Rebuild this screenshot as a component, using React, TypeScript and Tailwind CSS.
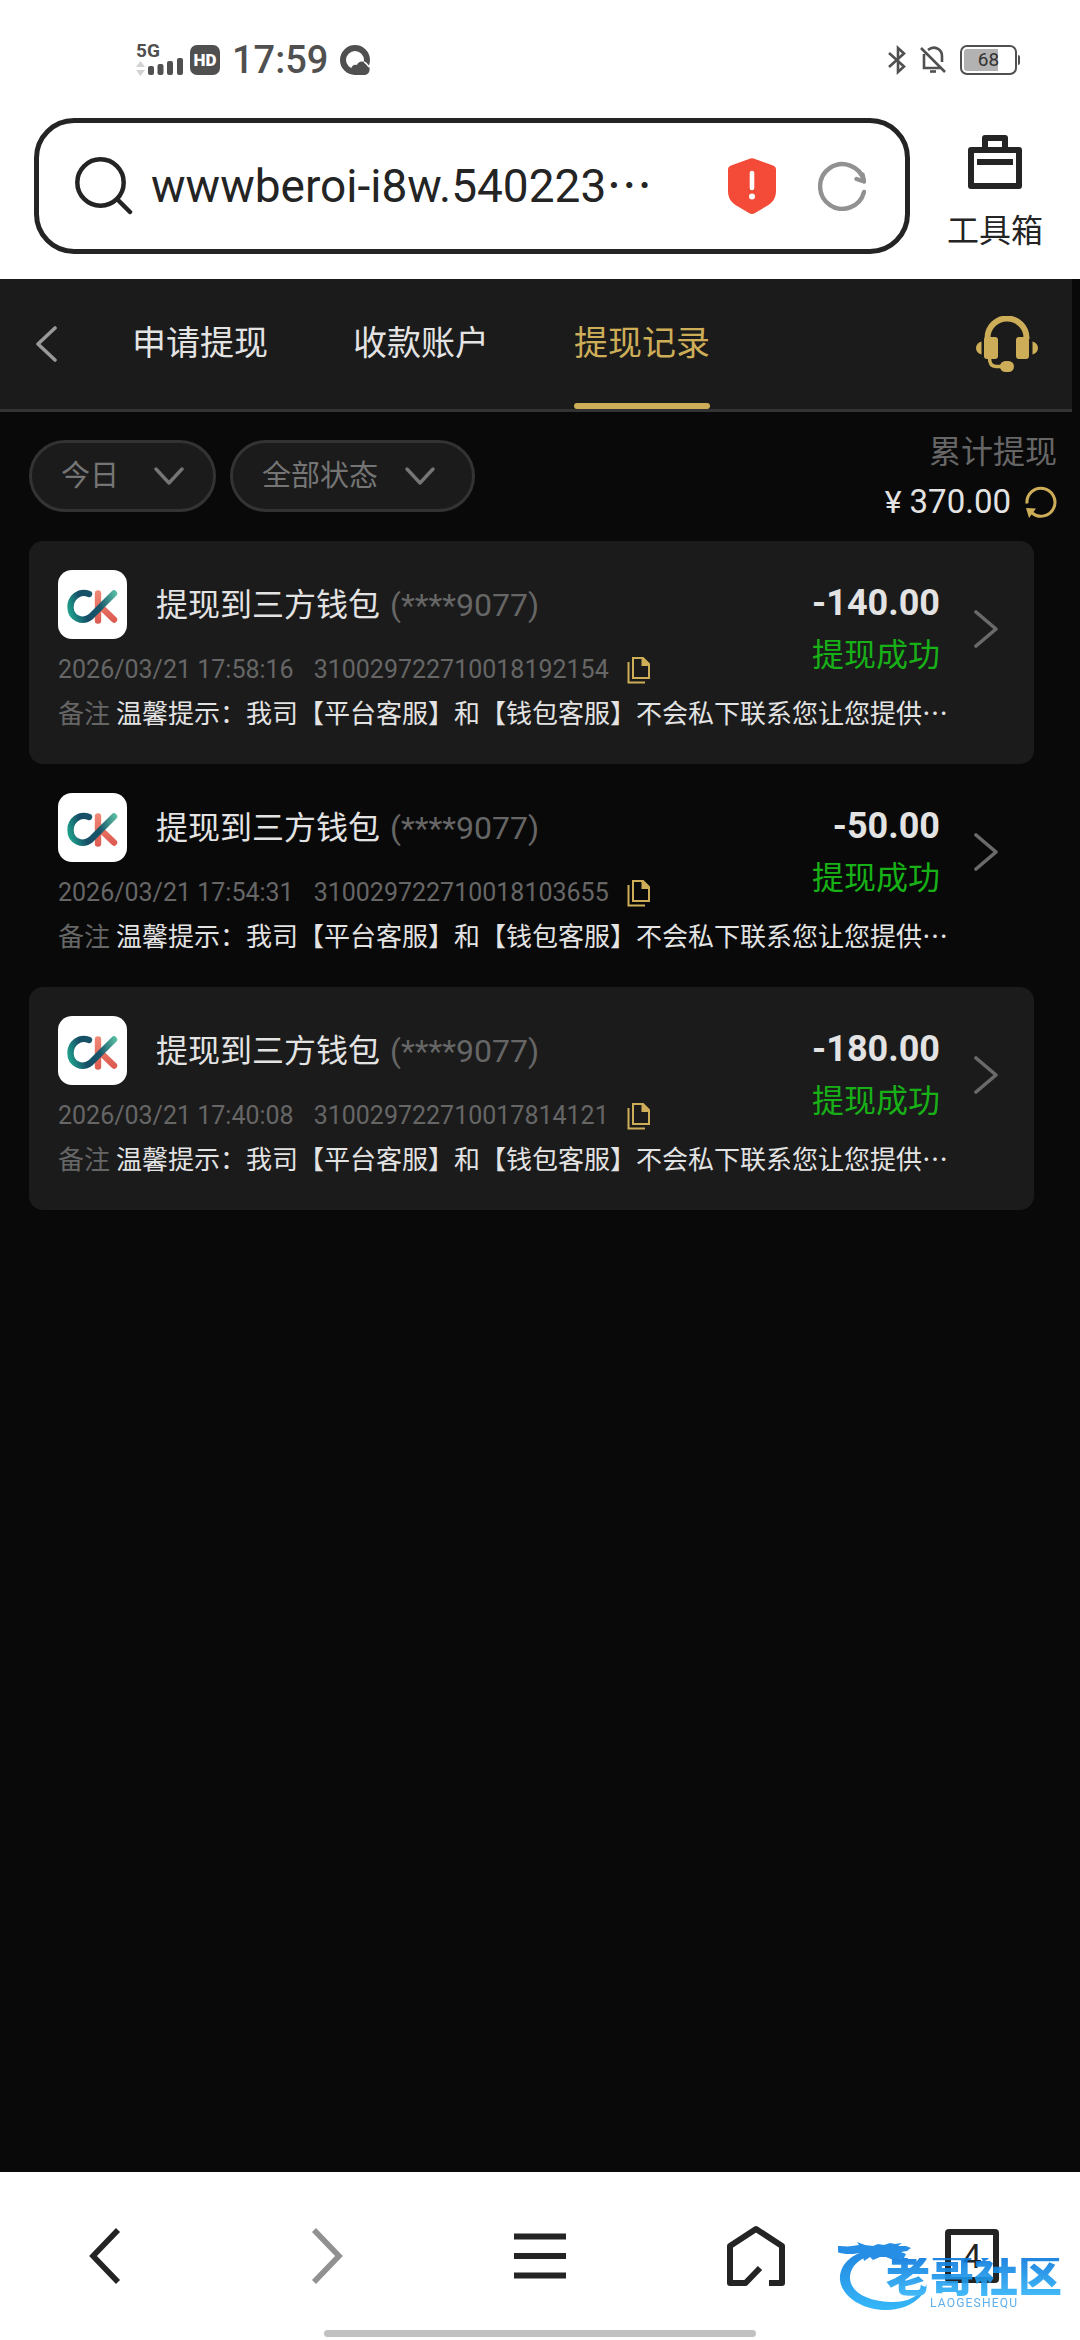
import { useState } from 'react';

interface WithdrawRecord {
  id: string;
  time: string;
  amount: string;
}

const tabs = ['申请提现', '收款账户', '提现记录'];

const records: WithdrawRecord[] = [
  { id: '310029722710018192154', time: '2026/03/21 17:58:16', amount: '-140.00' },
  { id: '310029722710018103655', time: '2026/03/21 17:54:31', amount: '-50.00' },
  { id: '310029722710017814121', time: '2026/03/21 17:40:08', amount: '-180.00' },
];

function StatusBar() {
  return (
    <div className="flex h-[118px] items-center justify-between pt-[2px] pl-[136px] pr-[60px] text-[#505050]">
      <div className="flex items-center">
        <div className="relative h-8 w-[47px]">
          <span className="absolute -top-[2px] left-0 text-[19px] leading-[18px] font-bold">5G</span>
          <svg className="absolute inset-0" width="47" height="32" viewBox="0 0 47 32" fill="currentColor">
            <path d="M4.500 17l4.500 6H0zM0 26h9l-4.500 6z" fill="#d2d2d2" />
            <rect x="12" y="22" width="6" height="9" rx="2" />
            <rect x="21.500" y="20" width="6" height="11" rx="2" />
            <rect x="31" y="17" width="6" height="14" rx="2" />
            <rect x="41" y="14" width="6" height="17" rx="2" />
          </svg>
        </div>
        <span className="ml-[7px] flex h-[30px] w-[30px] items-center justify-center rounded-[7px] bg-[#505050] text-[17px] leading-[20px] font-black text-white">HD</span>
        <span className="ml-3 text-[38px] leading-[44px] font-medium">17:59</span>
        <svg className="ml-3" width="30" height="30" viewBox="0 0 30 30">
          <circle cx="15" cy="15" r="12" fill="none" stroke="currentColor" strokeWidth="6" />
          <path d="M11 25c0-4 3-6 6-5 1-4 7-5 9-1 5 1 5 10-1 11H14z" fill="currentColor" />
          <path d="M24 17c3 1 4 4 5 5" fill="none" stroke="#fff" strokeWidth="1.500" />
        </svg>
      </div>
      <div className="flex items-center">
        <svg width="18" height="30" viewBox="0 0 18 30" fill="none" stroke="currentColor" strokeWidth="2.600">
          <path d="M1 8l15 13.500L10 27V3l6 5.500L1 22" />
        </svg>
        <svg className="ml-[14px]" width="26" height="30" viewBox="0 0 26 30" fill="none" stroke="currentColor" strokeWidth="2.600">
          <path d="M4 9v14h17M8 5c6-5 14-1 14 6v6M1 3l24 24" />
          <path d="M10 26.500h6" />
        </svg>
        <div className="ml-[14px] flex items-center">
          <div className="relative flex h-[30px] w-[57px] items-center justify-center rounded-[7px] border-2 border-[#505050]">
            <div className="absolute inset-y-[2px] left-[2px] w-[34px] rounded-l-[3px] bg-[#b2b2b2]" />
            <span className="relative text-[19px] leading-[22px] text-[#333]">68</span>
          </div>
          <div className="ml-px h-[10px] w-[2px] rounded-r bg-[#505050]" />
        </div>
      </div>
    </div>
  );
}

function AddressBar() {
  return (
    <div className="flex pb-[25px] pl-[34px] text-[#242424]">
      <form className="flex h-[136px] min-w-0 flex-1 items-center rounded-[40px] border-[5px] border-[#242424] pr-[39px] pl-9" onSubmit={(e) => e.preventDefault()}>
        <svg className="shrink-0" width="58" height="58" viewBox="0 0 58 58" fill="none" stroke="currentColor" strokeWidth="4.500" strokeLinecap="round">
          <circle cx="25.500" cy="25.500" r="23.200" />
          <path d="M43 43l12 12" />
        </svg>
        <input
          type="text"
          aria-label="网址"
          defaultValue="wwwberoi-i8w.540223⋯"
          className="ml-[18px] min-w-0 flex-1 bg-transparent text-[46px] leading-[56px] outline-none"
        />
        <button type="button" aria-label="安全提示" className="shrink-0">
          <svg width="48" height="58" viewBox="0 0 48 58">
            <path d="M21 2q3-1.500 6 0l18 6.500q3 1 3 4V34c0 8-4 12-10 15.500L27 56q-3 2-6 0L10 49.500C4 46 0 42 0 34V12.500q0-3 3-4z" fill="#f34b38" />
            <path d="M24 16v15" stroke="#fff" strokeWidth="4.600" strokeLinecap="round" />
            <circle cx="24" cy="39.500" r="3" fill="#fff" />
          </svg>
        </button>
        <button type="button" aria-label="刷新" className="ml-[42px] shrink-0">
          <svg width="48" height="50" viewBox="0 0 48 50" fill="none" stroke="#919191" strokeWidth="4.400" strokeLinecap="round" strokeLinejoin="round">
            <path d="M46 31A22.300 22.300 0 1 1 46 20" />
            <path d="M38.500 18l7.500 2.500-1.500-7" />
          </svg>
        </button>
      </form>
      <button type="button" className="flex w-[170px] flex-col items-center pt-[17px]">
        <svg width="54" height="54" viewBox="0 0 54 54" fill="none" stroke="currentColor" strokeWidth="6" strokeLinejoin="round">
          <path d="M3 15h48v36H3z" />
          <path d="M17 15V3h20v12M9 27h36" />
        </svg>
        <span className="mt-[22px] text-[32px] leading-[40px]">工具箱</span>
      </button>
    </div>
  );
}

function ChevronDown() {
  return (
    <svg width="30" height="18" viewBox="0 0 30 18" fill="none" stroke="#757575" strokeWidth="3.400" strokeLinecap="round" strokeLinejoin="round">
      <path d="M2 2l13 14L28 2" />
    </svg>
  );
}

function WalletLogo() {
  return (
    <svg className="shrink-0 rounded-[14px] bg-white" width="69" height="69" viewBox="0 0 69 69" fill="none" strokeWidth="6.400" strokeLinecap="round">
      <defs>
        <linearGradient id="ck-c" x1="10" y1="40" x2="59" y2="24" gradientUnits="userSpaceOnUse">
          <stop offset="0" stopColor="#1fa08c" />
          <stop offset="0.300" stopColor="#164f66" />
          <stop offset="0.600" stopColor="#17556a" />
          <stop offset="1" stopColor="#5cc0a6" />
        </linearGradient>
        <linearGradient id="ck-k" x1="40" y1="20" x2="46" y2="53" gradientUnits="userSpaceOnUse">
          <stop offset="0" stopColor="#f08a78" />
          <stop offset="1" stopColor="#dd5a50" />
        </linearGradient>
      </defs>
      <path d="M40 23.500v27M43 37l13 12.500" stroke="url(#ck-k)" />
      <path d="M31 24C21 20 12.500 28 12.500 37c0 11 12 16.500 20.500 9.500L56 23.500" stroke="url(#ck-c)" />
    </svg>
  );
}

function RecordCard({ record }: { record: WithdrawRecord }) {
  return (
    <li className="rounded-[14px] pt-[29px] pr-9 pb-[30px] pl-[29px] odd:bg-[#1b1b1b]">
      <div className="flex h-[118px] items-start">
        <div className="min-w-0 flex-1">
          <div className="flex items-center">
            <WalletLogo />
            <span className="ml-[29px] text-[32px] leading-[40px] whitespace-nowrap text-[#e3e3e3]">提现到三方钱包</span>
            <span className="ml-[10px] text-[32px] leading-[40px] text-[#666]">(****9077)</span>
          </div>
          <div className="mt-4 flex items-center text-[25px] leading-[30px] whitespace-nowrap text-[#666]">
            <span>{record.time}</span>
            <span className="ml-5">{record.id}</span>
            <button type="button" aria-label="复制" className="ml-[18px]">
              <svg width="24" height="28" viewBox="0 0 24 28" fill="none" stroke="#cdad58" strokeWidth="2">
                <path d="M6 2h10l6 6v14H6z" />
                <path d="M14.500 1.500H16l6.500 7v1.500h-8z" fill="#cdad58" stroke="none" />
                <path d="M1.500 6v20.500H18" />
              </svg>
            </button>
          </div>
        </div>
        <div className="pt-[13px] pr-2 text-right">
          <div className="text-[36px] leading-[40px] font-bold text-[#e3e3e3]">{record.amount}</div>
          <div className="mt-3 text-[32px] leading-[40px] text-[#17b117]">提现成功</div>
        </div>
        <button type="button" aria-label="查看详情" className="ml-[26px] self-center">
          <svg width="24" height="38" viewBox="0 0 24 38" fill="none" stroke="#6a6a6a" strokeWidth="3.600" strokeLinecap="round" strokeLinejoin="round">
            <path d="M2 2l20 17L2 36" />
          </svg>
        </button>
      </div>
      <p className="mt-[6px] text-[26px] leading-[40px] whitespace-nowrap text-[#e3e3e3]">
        <span className="mr-[6px] text-[#666]">备注</span>
        温馨提示：我司【平台客服】和【钱包客服】不会私下联系您让您提供⋯
      </p>
    </li>
  );
}

function Watermark() {
  return (
    <div className="pointer-events-none absolute right-[18px] bottom-[26px] h-[78px] w-[224px] opacity-90">
      <svg className="absolute inset-0" width="224" height="78" viewBox="0 0 224 78">
        <defs>
          <linearGradient id="dragon" x1="0" y1="0" x2="0" y2="1">
            <stop offset="0" stopColor="#0b79dd" />
            <stop offset="1" stopColor="#20b0f8" />
          </linearGradient>
        </defs>
        <path d="M28 15C12 19 1 30 2 44c2 18 25 31 48 30 21-1 36-12 39-26-7 12-20 19-37 18-23-1-41-10-40-26 1-11 11-18 22-21z" fill="url(#dragon)" />
        <path
          d="M0 10c5 0 9 1 14 0l7-1-2-3 8 3 8 1 5-2 6 1 6-2 5 1 7-1-4 3 8 0 5 2-4 3-6 1 5 2-2 4-4 1 4 2-8 0-5-2-5-2-6 0-7 3-3-3-6 4-1-4-6 0 4-4-8 1-7 0-6-1-5-2z"
          fill="#0f82e2"
        />
      </svg>
      <span className="absolute top-[22px] right-0 bg-gradient-to-b from-[#0b79dd] to-[#30b4f8] bg-clip-text text-[44px] leading-[38px] font-black whitespace-nowrap text-transparent">老哥社区</span>
      <span className="absolute top-[61px] left-[92px] text-[12px] leading-[12px] tracking-widest text-[#4ea6ea]">LAOGESHEQU</span>
    </div>
  );
}

function BottomBar() {
  return (
    <footer className="relative h-[168px] bg-white text-[#242424]">
      <nav className="grid h-full grid-cols-5 items-center justify-items-center">
        <button type="button" aria-label="后退" className="mr-[7px]">
          <svg width="32" height="58" viewBox="0 0 32 58" fill="none" stroke="currentColor" strokeWidth="5.600">
            <path d="M29 3L4 29l25 26" />
          </svg>
        </button>
        <button type="button" aria-label="前进" className="ml-[5px]">
          <svg width="32" height="58" viewBox="0 0 32 58" fill="none" stroke="#919191" strokeWidth="5.600">
            <path d="M3 3l25 26L3 55" />
          </svg>
        </button>
        <button type="button" aria-label="菜单">
          <svg width="52" height="48" viewBox="0 0 52 48" stroke="currentColor" strokeWidth="6">
            <path d="M0 4.500h52M0 24h52M0 43.500h52" />
          </svg>
        </button>
        <button type="button" aria-label="主页">
          <svg width="58" height="62" viewBox="0 0 58 62" fill="none" stroke="currentColor" strokeWidth="6" strokeLinejoin="round">
            <path d="M42 58h13V21L29 4 3 21v37h15.500L33 43" />
          </svg>
        </button>
        <button type="button" aria-label="标签页" className="flex h-[54px] w-[54px] items-center justify-center rounded-[4px] border-[6px] border-[#242424] text-[34px] leading-[40px]">
          4
        </button>
      </nav>
      <div className="absolute inset-x-0 bottom-[3px] mx-auto h-[7px] w-2/5 rounded-full bg-[#c1c1c1]" />
      <Watermark />
    </footer>
  );
}

export default function App() {
  const [activeTab, setActiveTab] = useState('提现记录');

  return (
    <div lang="zh-CN" className="flex min-h-screen flex-col bg-[#090909] font-['Roboto','Noto_Sans_CJK_SC',sans-serif]">
      <header className="bg-white">
        <StatusBar />
        <AddressBar />
      </header>

      <main className="flex-1">
        <div className="mr-2 flex h-[133px] items-center border-b-[3px] border-[#333] bg-[#1b1b1b] pr-[34px] pl-[35px]">
          <button type="button" aria-label="返回">
            <svg width="23" height="36" viewBox="0 0 23 36" fill="none" stroke="#999" strokeWidth="3.600" strokeLinecap="round" strokeLinejoin="round">
              <path d="M20 2L3 18l17 16" />
            </svg>
          </button>
          <nav className="ml-[74px] flex h-full flex-1 gap-[85px]">
            {tabs.map((tab) => (
              <button
                key={tab}
                type="button"
                onClick={() => setActiveTab(tab)}
                className={`relative h-full pb-[2px] text-[34px] leading-[44px] whitespace-nowrap ${tab === activeTab ? 'text-[#cdad58]' : 'text-[#e3e3e3]'}`}
              >
                {tab}
                {tab === activeTab && <span className="absolute inset-x-0 bottom-0 h-[6px] rounded-full bg-[#cdad58]" />}
              </button>
            ))}
          </nav>
          <button type="button" aria-label="客服">
            <svg width="62" height="56" viewBox="0 0 62 56" fill="#cdad58">
              <path d="M11.500 23v-1a19.500 19.500 0 0 1 39 0v1" fill="none" stroke="#cdad58" strokeWidth="6" />
              <rect x="8" y="21" width="14" height="22" rx="3" />
              <rect x="40" y="21" width="13" height="22" rx="3" />
              <path d="M5.500 25.500v13C-1.800 37-1.800 27 5.500 25.500zM56.500 25.500v13c7.300-1.500 7.300-11.500 0-13z" />
              <path d="M13.500 42c0 6 2 8.500 6.500 8.500h6" fill="none" stroke="#cdad58" strokeWidth="3.500" />
              <rect x="24" y="45" width="14" height="11" rx="5.500" />
            </svg>
          </button>
        </div>

        <div className="flex h-[129px] justify-between pr-[23px] pl-[29px]">
          <div className="flex gap-[14px] pt-7 text-[29px] text-[#757575]">
            <div className="relative h-[72px]">
              <select aria-label="日期" className="h-[72px] w-[187px] appearance-none rounded-full border-[3px] border-[#333] bg-[#1b1b1b] pt-[2px] pl-[29px]">
                <option>今日</option>
              </select>
              <span className="pointer-events-none absolute inset-y-0 right-8 flex items-center">
                <ChevronDown />
              </span>
            </div>
            <div className="relative h-[72px]">
              <select aria-label="状态" className="h-[72px] w-[245px] appearance-none rounded-full border-[3px] border-[#333] bg-[#1b1b1b] pt-[2px] pl-[29px]">
                <option>全部状态</option>
              </select>
              <span className="pointer-events-none absolute inset-y-0 right-10 flex items-center">
                <ChevronDown />
              </span>
            </div>
          </div>
          <div className="pt-[15px] text-right text-[32px] leading-[50px]">
            <div className="text-[#666]">累计提现</div>
            <div className="flex items-center justify-end text-[#e3e3e3]">
              <span>¥</span>
              <span className="ml-2 text-[33px]">370.00</span>
              <button type="button" aria-label="刷新金额" className="ml-[14px]">
                <svg width="32" height="32" viewBox="0 0 32 32" fill="none" stroke="#cdad58" strokeWidth="3">
                  <path d="M2 17.500A14 14 0 1 1 7 27" />
                  <path d="M1 22l10 .500-7 9.500z" fill="#cdad58" stroke="none" />
                </svg>
              </button>
            </div>
          </div>
        </div>

        <ul className="mr-[46px] ml-[29px]">
          {records.map((record) => (
            <RecordCard key={record.id} record={record} />
          ))}
        </ul>
      </main>

      <BottomBar />
    </div>
  );
}
